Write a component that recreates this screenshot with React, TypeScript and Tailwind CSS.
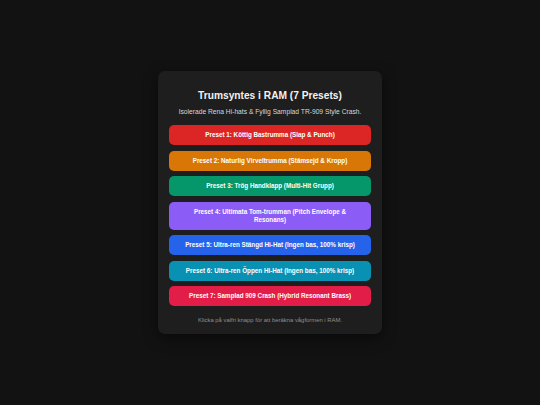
const presets = [
  { label: "Preset 1: Köttig Bastrumma (Slap & Punch)", color: "bg-[#dc2626]" },
  { label: "Preset 2: Naturlig Virveltrumma (Stämsejd & Kropp)", color: "bg-[#d97706]" },
  { label: "Preset 3: Trög Handklapp (Multi-Hit Grupp)", color: "bg-[#059669]" },
  { label: "Preset 4: Ultimata Tom-trumman (Pitch Envelope & Resonans)", color: "bg-[#8b5cf6]" },
  { label: "Preset 5: Ultra-ren Stängd Hi-Hat (Ingen bas, 100% krisp)", color: "bg-[#2563eb]" },
  { label: "Preset 6: Ultra-ren Öppen Hi-Hat (Ingen bas, 100% krisp)", color: "bg-[#0891b2]" },
  { label: "Preset 7: Samplad 909 Crash (Hybrid Resonant Brass)", color: "bg-[#e11d48]" },
];

export default function App() {
  return (
    <div
      className="flex h-[405px] w-[540px] items-center justify-center bg-[#121212]"
      style={{ fontFamily: '"Liberation Sans", Arial, sans-serif' }}
    >
      <div className="w-[224px] rounded-[7px] bg-[#1e1e1e] px-[11px] pb-[9px] pt-[17px] text-center shadow-[0_4px_14px_rgba(0,0,0,0.5)]">
        <h1 className="text-[10.2px] font-bold leading-[15px] text-[#f2f2f2]">Trumsyntes i RAM (7 Presets)</h1>
        <p className="mt-[4px] text-[6.7px] leading-[10px] text-[#d8d8d8]">
          Isolerade Rena Hi-hats &amp; Fyllig Samplad TR-909 Style Crash.
        </p>
        <div className="mt-[8px] flex flex-col gap-[5.5px]">
          {presets.map((p) => (
            <button
              key={p.label}
              className={`${p.color} rounded-[5px] px-[10px] py-[6px] text-[6.3px] font-bold leading-[8px] text-white`}
            >
              {p.label}
            </button>
          ))}
        </div>
        <p className="mt-[10px] text-[5.9px] leading-[9px] text-[#8f8f8f]">
          Klicka på valfri knapp för att beräkna vågformen i RAM.
        </p>
      </div>
    </div>
  );
}
